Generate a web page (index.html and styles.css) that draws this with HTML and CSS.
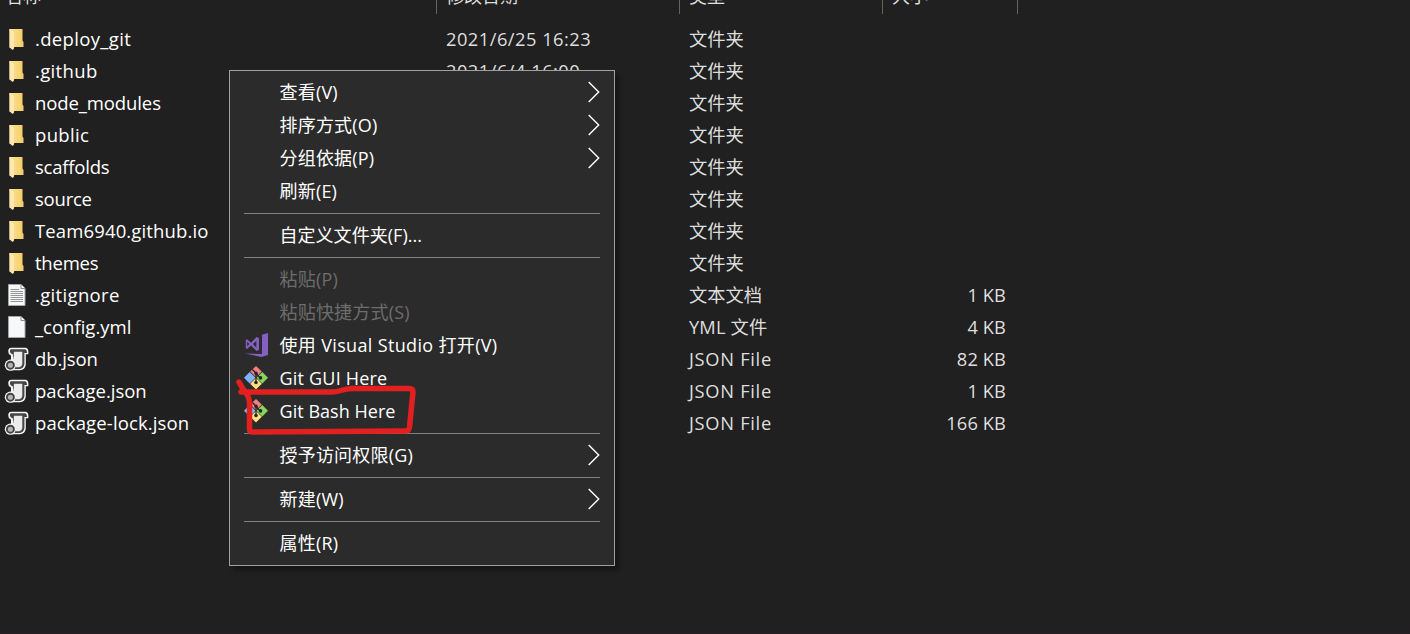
FILE: index.html
```html
<!DOCTYPE html>
<html lang="zh-CN">
<head>
<meta charset="utf-8">
<title>文件资源管理器</title>
<link rel="stylesheet" href="styles.css">
</head>
<body>
<svg class="defs" aria-hidden="true">
  <defs>
    <linearGradient id="fold" x1="0" x2="1"><stop offset="0" stop-color="#ffe298"/><stop offset="1" stop-color="#f3cd62"/></linearGradient>
    <symbol id="folder" viewBox="0 0 24 24">
      <path d="M4.800 2H18V13.500L19 15V20H9z" fill="url(#fold)"/>
      <path d="M4.800 2 9.600 4.500V21L8.500 23 4.800 20.500z" fill="#ffe9ae"/>
    </symbol>
    <symbol id="page" viewBox="0 0 24 24">
      <path d="M4 1.500H16.500L20.500 5.500V22.500H4z" fill="#f6f8f9" stroke="#a5a5a5"/>
      <path d="M16.500 1.500V5.500H20.500" fill="#fff" stroke="#8b8b8b"/>
    </symbol>
    <symbol id="lines" viewBox="0 0 24 24">
      <path d="M6 6.500H14.500M6 8.500H18.500M6 10.500H18.500M6 12.500H18.500M6 14.500H18.500M6 16.500H18.500M6 18.500H18.500" stroke="#888" stroke-width=".9"/>
    </symbol>
    <symbol id="script" viewBox="0 0 25 24">
      <path d="M7 .8H22Q25 1.500 24.300 7.300H21.800V17.500Q21 23 16 23.200H7V8.500Q4 7.500 4.300 3 5 .8 7 .8z" fill="#f4f4f4"/>
      <path d="M7.300 2.200H21.300Q23.300 2.800 23 5.900H20.400V17Q19.800 21.500 15.500 21.900H10V13L8.600 7.100Q5.700 6.500 5.900 3.500 6 2.200 7.300 2.200z" fill="#454545"/>
      <path d="M10 4.700H18.300V17Q18 19.800 15.500 20.200H12L9.800 14V7z" fill="#ececec"/>
      <circle cx="6.400" cy="18.200" r="5.600" fill="#f5f5f5"/>
      <circle cx="6.400" cy="18.200" r="3.500" fill="#b5b5b5" stroke="#444" stroke-width="1.900"/>
    </symbol>
    <symbol id="git" viewBox="0 0 24 24">
      <path d="M12 0 17.800 5.600 12 11.300 6.200 5.600z" fill="#f17e80"/>
      <path d="M5.700 6.100 11.500 11.700 5.700 17.400 0 11.700z" fill="#80b3ff"/>
      <path d="M18.300 6.100 24 11.700 18.300 17.400 12.500 11.700z" fill="#88d55e"/>
      <path d="M12 12.100 17.800 17.800 12 23.500 6.200 17.800z" fill="#ffe07f"/>
      <path d="M8.300 3.500 12 7V17M12 7.500 16 11.700" fill="none" stroke="#252525" stroke-width="1.300"/>
      <g fill="#252525"><circle cx="12" cy="7.200" r="1.700"/><circle cx="12" cy="16.500" r="1.800"/><circle cx="16.500" cy="11.900" r="1.800"/></g>
    </symbol>
    <symbol id="vs" viewBox="0 0 24 24">
      <path d="M18 1.800 24 0V22L17.500 24 1 20.600 18 21z" fill="#865fc5"/>
      <path fill-rule="evenodd" d="M1.800 7 3 6.200 7 9.800 12.500 4 15 5V17L12.500 18 7 12.500 3 16 1.800 15.200zM3.200 8.800V13.300L5.300 11.100zM12.300 8 9 11.100 12.300 14.500z" fill="#865fc5"/>
    </symbol>
    <symbol id="chevron" viewBox="0 0 12 22"><path d="M.7 1 10.700 11 .7 21" fill="none" stroke="#fff" stroke-width="1.400"/></symbol>
  </defs>
</svg>
<main class="explorer">
  <div class="columns head">
    <span>名称</span><span>修改日期</span><span>类型</span><span>大小</span>
  </div>
  <div class="rows">
    <div class="columns row"><span class="name"><svg><use href="#folder"/></svg><b class="loose">.deploy_git</b></span><span class="date">2021/6/25 16:23</span><span>文件夹</span><span></span></div>
    <div class="columns row"><span class="name"><svg><use href="#folder"/></svg><b class="loose">.github</b></span><span class="date">2021/6/4 16:00</span><span>文件夹</span><span></span></div>
    <div class="columns row"><span class="name"><svg><use href="#folder"/></svg><b class="snug">node_modules</b></span><span></span><span>文件夹</span><span></span></div>
    <div class="columns row"><span class="name"><svg><use href="#folder"/></svg><b class="loose">public</b></span><span></span><span>文件夹</span><span></span></div>
    <div class="columns row"><span class="name"><svg><use href="#folder"/></svg><b class="tight">scaffolds</b></span><span></span><span>文件夹</span><span></span></div>
    <div class="columns row"><span class="name"><svg><use href="#folder"/></svg><b class="tight">source</b></span><span></span><span>文件夹</span><span></span></div>
    <div class="columns row"><span class="name"><svg><use href="#folder"/></svg><b class="airy">Team6940.github.io</b></span><span></span><span>文件夹</span><span></span></div>
    <div class="columns row"><span class="name"><svg><use href="#folder"/></svg><b class="tight">themes</b></span><span></span><span>文件夹</span><span></span></div>
    <div class="columns row"><span class="name"><svg><use href="#page"/><use href="#lines"/></svg><b class="loose">.gitignore</b></span><span></span><span>文本文档</span><span class="size">1 KB</span></div>
    <div class="columns row"><span class="name"><svg><use href="#page"/></svg><b>_config.yml</b></span><span></span><span class="airy">YML 文件</span><span class="size">4 KB</span></div>
    <div class="columns row"><span class="name"><svg><use href="#script"/></svg><b class="snug">db.json</b></span><span></span><span class="type">JSON File</span><span class="size">82 KB</span></div>
    <div class="columns row"><span class="name"><svg><use href="#script"/></svg><b>package.json</b></span><span></span><span class="type">JSON File</span><span class="size">1 KB</span></div>
    <div class="columns row"><span class="name"><svg><use href="#script"/></svg><b class="airy">package-lock.json</b></span><span></span><span class="type">JSON File</span><span class="size">166 KB</span></div>
  </div>
  <nav class="menu">
    <div class="item"><span>查看(V)</span><svg class="arrow"><use href="#chevron"/></svg></div>
    <div class="item"><span>排序方式(O)</span><svg class="arrow"><use href="#chevron"/></svg></div>
    <div class="item"><span>分组依据(P)</span><svg class="arrow"><use href="#chevron"/></svg></div>
    <div class="item"><span>刷新(E)</span></div>
    <hr>
    <div class="item"><span class="plain">自定义文件夹(F)...</span></div>
    <hr>
    <div class="item off"><span>粘贴(P)</span></div>
    <div class="item off"><span>粘贴快捷方式(S)</span></div>
    <div class="item"><svg class="ico"><use href="#vs"/></svg><span class="loose">使用 Visual Studio 打开(V)</span></div>
    <div class="item"><svg class="ico"><use href="#git"/></svg><span>Git GUI Here</span></div>
    <div class="item"><svg class="ico"><use href="#git"/></svg><span class="plain">Git Bash Here</span></div>
    <hr>
    <div class="item"><span>授予访问权限(G)</span><svg class="arrow"><use href="#chevron"/></svg></div>
    <hr>
    <div class="item"><span>新建(W)</span><svg class="arrow"><use href="#chevron"/></svg></div>
    <hr>
    <div class="item"><span>属性(R)</span></div>
  </nav>
  <svg class="marker" viewBox="230 375 190 65">
    <path d="M239 382Q242 388 246 393 250 398 249.500 406V429Q249.500 432 253 432L406 431Q409 431 409.500 427L413 392Q413 388.500 409 388.500H352C340 389 341 392.500 330 392H241"/>
  </svg>
</main>
</body>
</html>
```
FILE: styles.css
```css
body {
  margin: 0;
  background: #202020;
  font: 18px/32px "Open Sans", "Noto Sans CJK SC", sans-serif;
}

.defs {
  position: absolute;
  width: 0;
  height: 0;
}

.explorer {
  position: relative;
  box-sizing: border-box;
  height: 634px;
  overflow: hidden;
  border-bottom: 1px solid #2b1c24;
  color: #dedede;
}

.columns {
  display: grid;
  grid-template-columns: 437px 243px 203px 135px;
}

.columns > span {
  box-sizing: border-box;
  padding-left: 9px;
  white-space: nowrap;
}

.head {
  grid-template-rows: 14px;
  height: 14px;
  overflow: hidden;
  align-items: end;
}

.head > span {
  height: 32px;
  border-right: 1px solid #636363;
  line-height: 28px;
}

.head > span:first-child {
  padding-left: 5px;
}

.rows {
  padding-top: 9px;
}

.row {
  height: 32px;
  font-size: 18.3px;
}

.columns > .name {
  display: flex;
  align-items: center;
  gap: 6px;
  padding-left: 4px;
}

.name svg {
  width: 25px;
  height: 24px;
  overflow: visible;
}

.name b {
  font-size: 18.5px;
  font-weight: 400;
  color: #fff;
}

.date {
  letter-spacing: .48px;
}

.type {
  letter-spacing: .7px;
}

.columns > .size {
  padding-right: 12px;
  text-align: right;
  letter-spacing: .1px;
}

.menu {
  position: absolute;
  left: 229px;
  top: 70px;
  box-sizing: border-box;
  width: 386px;
  height: 496px;
  padding: 5px 14px;
  border: 1px solid #a0a0a0;
  background: #2b2b2b;
  box-shadow: 4px 4px 4px rgba(0, 0, 0, .35);
  color: #fff;
}

.item {
  display: grid;
  grid-template-columns: 36px 1fr 12px;
  align-items: center;
  height: 33px;
  line-height: 33px;
}

.item span {
  grid-column: 2;
  grid-row: 1;
  margin-left: -.5px;
  white-space: nowrap;
  letter-spacing: .2px;
}

.loose,
.item .loose {
  letter-spacing: .34px;
}

.airy {
  letter-spacing: .13px;
}

.snug {
  letter-spacing: -.1px;
}

.tight {
  letter-spacing: -.22px;
}

.item .plain {
  letter-spacing: .04px;
}

.off {
  color: #6d6d6d;
}

.ico {
  grid-column: 1;
  grid-row: 1;
  width: 24px;
  height: 24px;
  margin-bottom: 1px;
}

.arrow {
  grid-column: 3;
  width: 12px;
  height: 22px;
  margin-bottom: 2px;
}

.menu hr {
  height: 1px;
  margin: 5px 0;
  border: 0;
  background: #808080;
}

.marker {
  position: absolute;
  left: 230px;
  top: 375px;
  width: 190px;
  height: 65px;
  fill: none;
  stroke: #e2201f;
  stroke-width: 5.5;
  stroke-linecap: round;
  stroke-linejoin: round;
}
```
